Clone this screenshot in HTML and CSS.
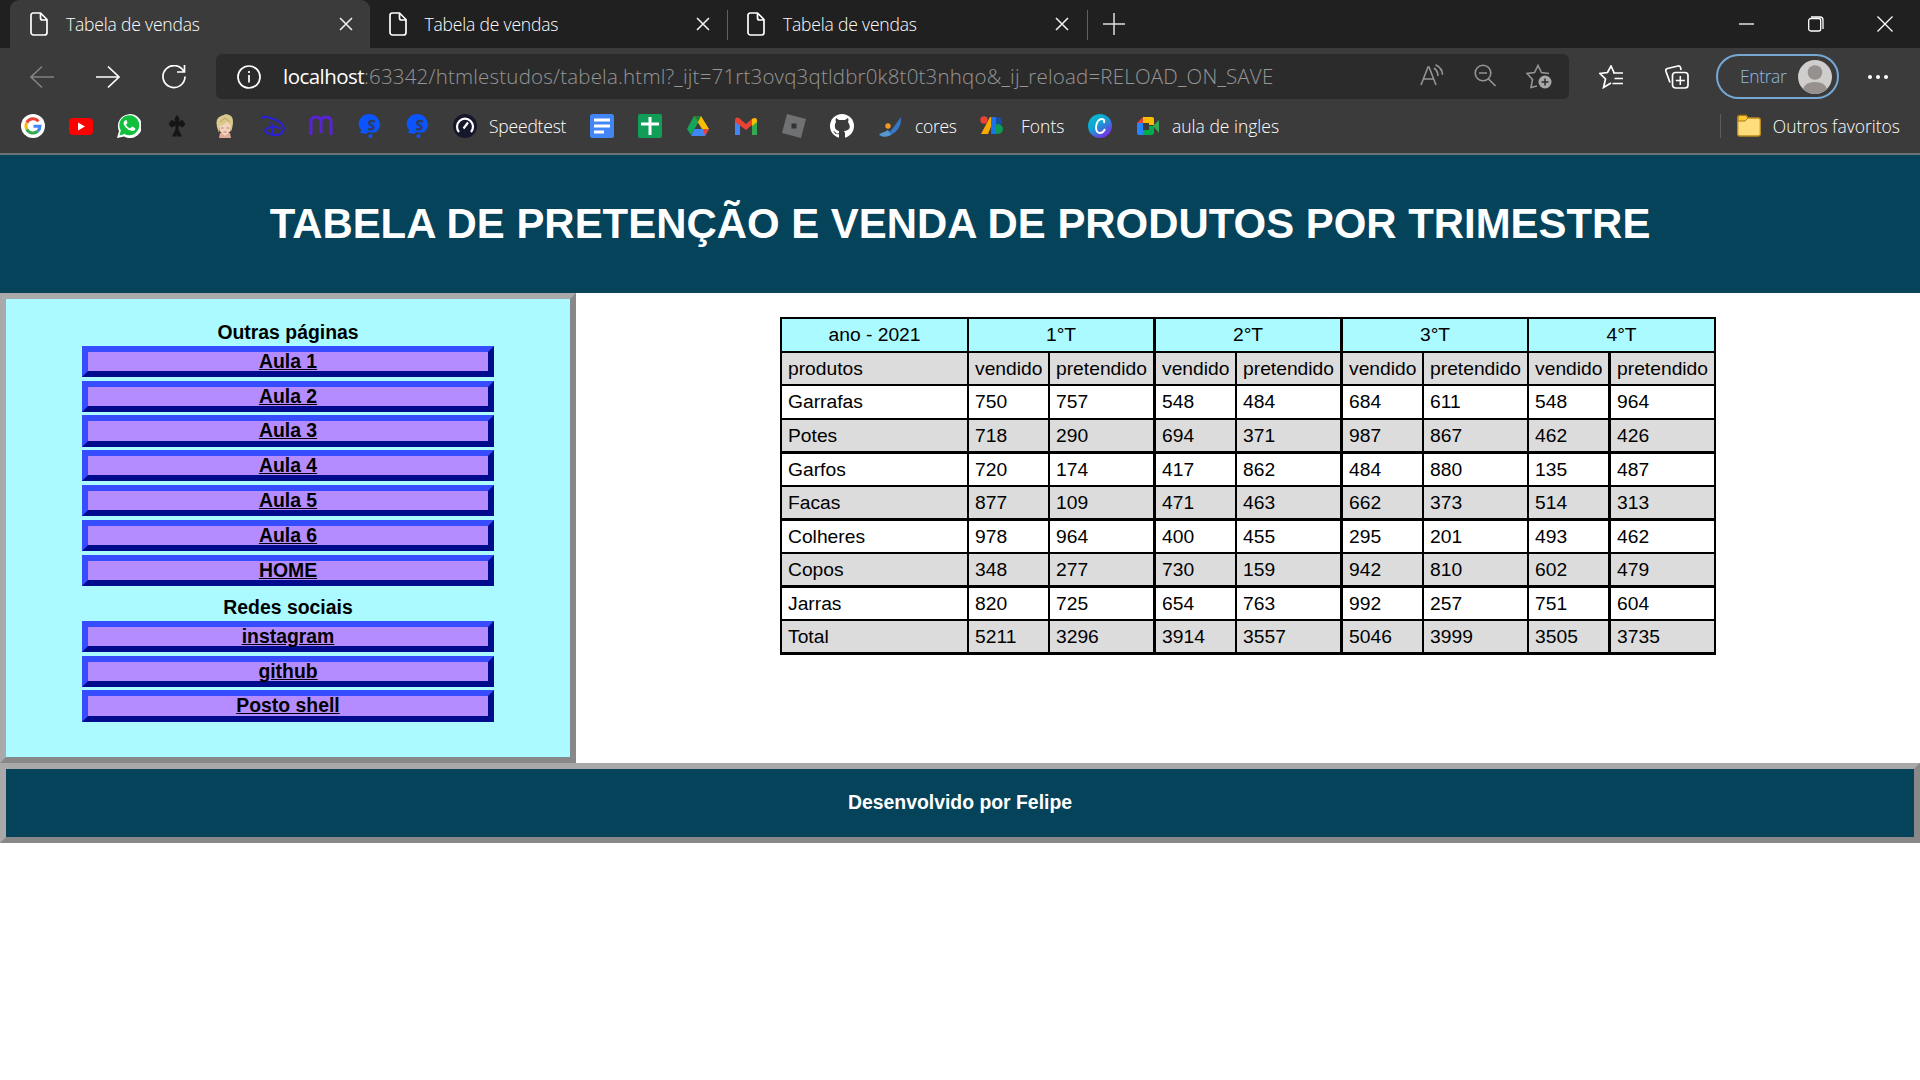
FILE: index.html
```html
<!DOCTYPE html>
<html lang="pt-BR">
<head>
<meta charset="utf-8">
<title>Tabela de vendas</title>
<link rel="stylesheet" href="styles.css">
</head>
<body>
<svg class="defs" width="0" height="0" aria-hidden="true">
  <symbol id="doc" viewBox="0 0 18 24"><path d="M3 1h7.5L17 7.500V20.500a2.500 2.500 0 0 1-2.500 2.500h-11A2.500 2.500 0 0 1 1 20.500V3.500A2.500 2.500 0 0 1 3 1zM10.500 1v5a2 2 0 0 0 2 2H17" fill="none" stroke="#fff" stroke-width="1.700"/></symbol>
  <symbol id="close" viewBox="0 0 14 14"><path d="M1 1l12 12M13 1L1 13" fill="none" stroke="#eee" stroke-width="1.600"/></symbol>
  <symbol id="shazam" viewBox="0 0 24 24"><path d="M12.500 0a10.500 10.500 0 0 1 8 17q-3 2.500-6 1.500l-3-.5-3 2-6-1.500 2-2Q1.500 13 1.500 9.500A10.500 10.500 0 0 1 12.500 0z" fill="#0b55ff"/><path d="M18 7.500c-6-1.500-8 1.500-4 3.500s3.500 5-3 4" fill="none" stroke="#2c3b66" stroke-width="2.400"/><circle cx="13.500" cy="22" r="2" fill="#0b55ff"/></symbol>
</svg>
<div class="browser">
  <div class="tabs">
    <div class="tab active"><svg class="doc"><use href="#doc"/></svg><span>Tabela de vendas</span><svg class="x"><use href="#close"/></svg></div>
    <div class="tab"><svg class="doc"><use href="#doc"/></svg><span>Tabela de vendas</span><svg class="x"><use href="#close"/></svg></div>
    <div class="tab ruled"><svg class="doc"><use href="#doc"/></svg><span>Tabela de vendas</span><svg class="x"><use href="#close"/></svg></div>
    <div class="newtab"><svg width="22" height="22"><path d="M11 0v22M0 11h22" stroke="#ddd" stroke-width="1.500"/></svg></div>
    <div class="controls">
      <svg width="16" height="16"><path d="M0 8h15" stroke="#fff" stroke-width="1.300"/></svg>
      <svg width="16" height="16"><path d="M3 1h9q3 0 3 3v9" fill="none" stroke="#fff" stroke-width="1.300"/><rect x=".7" y="2.500" width="12" height="12.500" rx="2" fill="none" stroke="#fff" stroke-width="1.300"/></svg>
      <svg width="16" height="16"><path d="M.5.5l15 15M15.500.5l-15 15" stroke="#fff" stroke-width="1.300"/></svg>
    </div>
  </div>
  <div class="toolbar">
    <div class="nav">
      <svg class="i24" viewBox="0 0 24 24"><path d="M24 12H1M12 1.500L1 12l11 10.500" fill="none" stroke="#828282" stroke-width="1.600"/></svg>
      <svg class="i24" viewBox="0 0 24 24"><path d="M0 12h23M12 1.500L23 12 12 22.500" fill="none" stroke="#fff" stroke-width="1.700"/></svg>
      <svg class="i24" viewBox="0 0 24 24"><path d="M22 7A11 11 0 1 0 23 11.500M22.500 0v7h-7.500" fill="none" stroke="#fff" stroke-width="1.700"/></svg>
    </div>
    <div class="address">
      <svg class="i24" viewBox="0 0 24 24"><circle cx="12" cy="12" r="11" fill="none" stroke="#fff" stroke-width="1.700"/><path d="M12 10v7.500M12 6v2" stroke="#fff" stroke-width="1.700"/></svg>
      <span class="url"><b>localhost</b>:63342/htmlestudos/tabela.html?_ijt=71rt3ovq3qtldbr0k8t0t3nhqo&amp;_ij_reload=RELOAD_ON_SAVE</span>
      <div class="address-actions">
        <svg class="i24" viewBox="0 0 24 24"><path d="M1 21L8 3h1l7 18M3.500 15h10M14 4q4 3 4 8M15.500.7q7 3.500 7 10" fill="none" stroke="#959595" stroke-width="1.600"/></svg>
        <svg class="i24" viewBox="0 0 24 24"><circle cx="10" cy="9" r="7.800" fill="none" stroke="#959595" stroke-width="1.600"/><path d="M6 9h8M15.500 15l7 7" stroke="#959595" stroke-width="1.700"/></svg>
        <svg class="i26" viewBox="0 0 26 25"><path d="M11 22l-6 1.500 1.500-8L1 9.500l7.500-1L12 1.500l3.500 7 7.500 1" fill="none" stroke="#959595" stroke-width="1.600"/><circle cx="19" cy="18" r="6.500" fill="#a8a8a8"/><path d="M19 14.500v7M15.500 18h7" stroke="#2b2b2b" stroke-width="1.500"/></svg>
      </div>
    </div>
    <div class="tools">
      <svg class="i24" viewBox="0 0 24 24"><path d="M12 18l-7.500 4.500 2-8.500L1 8.500l7.500-1L12 1l3 6.500M14 8h10M15.500 13.500H24M13.500 18.500H24" fill="none" stroke="#fff" stroke-width="1.700"/></svg>
      <svg class="i24" viewBox="0 0 24 24"><path d="M5 17.500L1 6.500q-.7-2.500 1.500-3L13 1q2-.5 2.700 2L16 5" fill="none" stroke="#fff" stroke-width="1.700"/><rect x="7.500" y="7.500" width="15.500" height="15.500" rx="3" fill="none" stroke="#fff" stroke-width="1.700"/><path d="M15.300 11v9M10.800 15.500h9" stroke="#fff" stroke-width="1.500"/></svg>
    </div>
    <div class="signin"><span>Entrar</span><svg width="34" height="34" viewBox="0 0 34 34"><circle cx="17" cy="17" r="17" fill="#d0cecc"/><circle cx="17" cy="12.500" r="7.300" fill="#96918e"/><path d="M5 29Q7 22 17 22t12 7Q24 34 17 34T5 29z" fill="#96918e"/></svg></div>
    <svg class="more" width="20" height="6"><circle cx="2" cy="3" r="2" fill="#fff"/><circle cx="10" cy="3" r="2" fill="#fff"/><circle cx="18" cy="3" r="2" fill="#fff"/></svg>
  </div>
  <div class="bookmarks">
    <svg class="i24" viewBox="0 0 24 24"><circle cx="12" cy="12" r="12" fill="#fff"/><g fill="none" stroke-width="3"><path d="M17.500 7.300A7 7 0 0 0 5.800 8.700" stroke="#ea4335"/><path d="M5.800 8.700A7 7 0 0 0 5.800 15.300" stroke="#fbbc05"/><path d="M5.800 15.300A7 7 0 0 0 16.800 17.200" stroke="#34a853"/><path d="M16.800 17.200A7 7 0 0 0 19 12.200H12.500" stroke="#4285f4"/></g></svg>
    <svg class="i24" viewBox="0 0 24 24"><rect y="4" width="24" height="17" rx="4" fill="#f00"/><path d="M9 8.500l7 4-7 4z" fill="#fff"/></svg>
    <svg class="i24" viewBox="0 0 24 24"><path d="M0 24l2-7A12 12 0 1 1 7 22.500z" fill="#fff"/><path d="M2.500 21.500l1.300-5A10 10 0 1 1 7.500 20z" fill="#12bf3c"/><path d="M8 6.500q-3 2 0 6t8 4.500q3-1 2-3l-3-1.500-2 2q-3-1-4-4l1.500-1.500L9.500 6z" fill="#fff"/></svg>
    <svg class="i24" viewBox="0 0 24 24"><path d="M12 1l2.500 3.500-1 3L17.500 6l3 4-3 3.500-4-2v4l3.500 7h-4.500l-.5-3-.5 3H7l3.500-7v-4l-4 2-3-3.500 3-4 4 1.500-1-3z" fill="#151515"/></svg>
    <svg class="i24" viewBox="0 0 24 24"><path d="M6 24l1-5h10l1 5z" fill="#dfac98"/><path d="M5.500 8h13l-1 9-5.500 5-5.500-5z" fill="#f5d2bd"/><path d="M4 13Q2 4 8 2l5-2q8 1 7 9l-1 6-1.500 3V11l-3.500-3-4 3-4 1 0 7z" fill="#d9c98c"/><path d="M8 14h2.500M13.500 14H16" stroke="#a08878"/><path d="M10.500 18h3" stroke="#b97878"/><path d="M7 8l5-4 5 4" fill="none" stroke="#b8a365" stroke-width="1"/></svg>
    <svg class="i24" viewBox="0 0 24 24"><path d="M0 5Q2 1.500 8 3.500q14 4 15 11-1 7-10 6.500-7-1-9-4 1-4 9-4 5 0 6 2M10 8q2 5 1 12" fill="none" stroke="#291fdc" stroke-width="2"/></svg>
    <svg class="i24" viewBox="0 0 24 24"><path d="M2 21V8q0-5 5-5t5 5v11V8q0-5 5-5t5 5v13" fill="none" stroke="#5a22d6" stroke-width="3"/></svg>
    <svg class="i24"><use href="#shazam"/></svg>
    <svg class="i24"><use href="#shazam"/></svg>
    <div class="mark speed"><svg class="i24" viewBox="0 0 24 24"><circle cx="12" cy="12" r="12" fill="#17172b"/><path d="M6 18A8 8 0 1 1 18 18" fill="none" stroke="#fff" stroke-width="2.200"/><path d="M10.500 14.500L15 8.500" stroke="#fff" stroke-width="2.200"/></svg><span>Speedtest</span></div>
    <svg class="i24" viewBox="0 0 24 24"><rect width="24" height="24" rx="2.500" fill="#4285f4"/><path d="M4 6h16M4 12h16M4 18h10" stroke="#fff" stroke-width="3"/></svg>
    <svg class="i24" viewBox="0 0 24 24"><rect width="24" height="24" rx="2" fill="#0f9d58"/><path d="M12 3v18M3 10h18" stroke="#fff" stroke-width="3"/></svg>
    <svg class="i24" viewBox="0 0 24 24"><path d="M8 2l4 7-7 12-4-6z" fill="#13a65b"/><path d="M8 2h7l8 13h-7z" fill="#fbbc05"/><path d="M8 2h7l-3 6z" fill="#188038"/><path d="M8.500 15H23l-4 7H5z" fill="#4285f4"/><path d="M17 15h6l-4 7z" fill="#ea4335"/></svg>
    <svg class="i24" viewBox="0 0 24 24"><path d="M1 7l5 3v11H1z" fill="#4285f4"/><path d="M18 10l5-3v14h-5z" fill="#34a853"/><path d="M1 7q0-5 4-3l7 6 7-6v6l-7 6-11-8z" fill="#ea4335"/><path d="M18 5q5-3 5 2v1l-5 4z" fill="#fbbc04"/></svg>
    <svg class="i24" viewBox="0 0 24 24"><path d="M5 0l19 5-5 19L0 19z" fill="#707173"/><rect x="9.500" y="9.500" width="5" height="5" fill="#333"/></svg>
    <svg class="i24" viewBox="0 0 24 24"><circle cx="12" cy="12" r="12" fill="#fff"/><path d="M9 24v-4q-4 1-5-2l-1-1q2 0 3 2 1 1 3 0v-2q-5-1-4-7l1-2q-1-2 0-4l3 2h6l3-2q1 2 0 4 5 8-4 9l1 2v5z" fill="#3b3b3b"/></svg>
    <div class="mark cores"><svg class="i24" viewBox="0 0 24 24"><path d="M23 3q1 12-10 18-8 3-12 0 10-1 14-7z" fill="#3677c7"/><path d="M1 20q6-2 9-4l3 5q-8 4-12-1z" fill="#5798cf"/><circle cx="10" cy="12" r="2.700" fill="#f39a24"/></svg><span>cores</span></div>
    <div class="mark fonts"><svg class="i24" viewBox="0 0 24 24"><path d="M10 3h4v2L8 20H1z" fill="#f9ab00"/><rect x="11" y="3" width="5" height="17" fill="#1a73e8"/><circle cx="4" cy="6" r="3.700" fill="#ea4335"/><path d="M16 3q6 0 6 4.500T16 12z" fill="#174ea6"/><path d="M16 10q7 0 7 5t-7 5z" fill="#0d9b55"/></svg><span>Fonts</span></div>
    <svg class="i24" viewBox="0 0 24 24"><defs><linearGradient id="canva" x1="0" y1="0" x2=".7" y2="1"><stop stop-color="#00c4cc"/><stop offset=".5" stop-color="#12a0d4"/><stop offset="1" stop-color="#7d2ae8"/></linearGradient></defs><circle cx="12" cy="12" r="12" fill="url(#canva)"/><path d="M16 9q1-4-2-4-5 0-6 8 0 6 4 6 3 0 5-4" fill="none" stroke="#fff" stroke-width="1.900"/></svg>
    <div class="mark meet"><svg class="i24" viewBox="0 0 24 24"><path d="M1 9l6-6v6z" fill="#ea4335"/><path d="M7 3h9q2 0 2 2v6h-5V9H7z" fill="#fbbc04"/><path d="M1 9h6v12H3q-2 0-2-2z" fill="#2684fc"/><path d="M7 16h6v-4h5v7q0 2-2 2H7z" fill="#00ac47"/><path d="M17 12l6-6v13z" fill="#35a853"/></svg><span>aula de ingles</span></div>
    <div class="mark other"><svg class="i24" viewBox="0 0 24 24"><path d="M.7 3Q1 1.500 3 1.500h6L11 4h10q2.300 0 2.300 2v14q0 2-2.300 2H3q-2.300 0-2.300-2z" fill="#ffdc7c" stroke="#bd8d1e" stroke-width="1.300"/><path d="M1 7h7l3-3-2-2.500H3Q1 1.500 1 3z" fill="#f9c92d" stroke="#a77717"/></svg><span>Outros favoritos</span></div>
  </div>
</div>
<header class="title"><h1>TABELA DE PRETENÇÃO E VENDA DE PRODUTOS POR TRIMESTRE</h1></header>
<main class="content">
  <aside class="sidebar">
    <h2>Outras páginas</h2>
    <ul>
      <li><a>Aula 1</a></li><li><a>Aula 2</a></li><li><a>Aula 3</a></li><li><a>Aula 4</a></li><li><a>Aula 5</a></li><li><a>Aula 6</a></li><li><a>HOME</a></li>
    </ul>
    <h2>Redes sociais</h2>
    <ul>
      <li><a>instagram</a></li><li><a>github</a></li><li><a>Posto shell</a></li>
    </ul>
  </aside>
  <section class="sales">
    <table>
      <colgroup><col class="c187"><col class="c81"><col class="c106"><col class="c81"><col class="c106"><col class="c81"><col class="c105"><col class="c82"><col class="c105"></colgroup>
      <thead>
        <tr><th>ano - 2021</th><th colspan="2" class="thick">1°T</th><th colspan="2" class="thick">2°T</th><th colspan="2">3°T</th><th colspan="2">4°T</th></tr>
      </thead>
      <tbody>
        <tr class="short"><td>produtos</td><td>vendido</td><td>pretendido</td><td>vendido</td><td>pretendido</td><td>vendido</td><td>pretendido</td><td>vendido</td><td>pretendido</td></tr>
        <tr><td>Garrafas</td><td>750</td><td>757</td><td>548</td><td>484</td><td>684</td><td>611</td><td>548</td><td>964</td></tr>
        <tr class="heavy"><td>Potes</td><td>718</td><td>290</td><td>694</td><td>371</td><td>987</td><td>867</td><td>462</td><td>426</td></tr>
        <tr class="short"><td>Garfos</td><td>720</td><td>174</td><td>417</td><td>862</td><td>484</td><td>880</td><td>135</td><td>487</td></tr>
        <tr class="heavy"><td>Facas</td><td>877</td><td>109</td><td>471</td><td>463</td><td>662</td><td>373</td><td>514</td><td>313</td></tr>
        <tr class="short"><td>Colheres</td><td>978</td><td>964</td><td>400</td><td>455</td><td>295</td><td>201</td><td>493</td><td>462</td></tr>
        <tr class="heavy"><td>Copos</td><td>348</td><td>277</td><td>730</td><td>159</td><td>942</td><td>810</td><td>602</td><td>479</td></tr>
        <tr class="short"><td>Jarras</td><td>820</td><td>725</td><td>654</td><td>763</td><td>992</td><td>257</td><td>751</td><td>604</td></tr>
        <tr class="heavy"><td>Total</td><td>5211</td><td>3296</td><td>3914</td><td>3557</td><td>5046</td><td>3999</td><td>3505</td><td>3735</td></tr>
      </tbody>
    </table>
  </section>
</main>
<footer class="credit">Desenvolvido por Felipe</footer>
</body>
</html>
```
FILE: styles.css
```css
* { box-sizing: border-box; }
body { margin: 0; background: #fff; color: #000; font-family: "Liberation Sans", Arial, sans-serif; font-size: 19.4px; }
svg { display: block; flex: none; }
.defs { position: absolute; }
.i24 { width: 24px; height: 24px; }
.i26 { width: 26px; height: 25px; }

.browser { height: 155px; background: #3b3b3b; border-bottom: 2px solid #6c7174; color: #fff; font-family: "Open Sans", "Noto Sans", sans-serif; font-weight: 300; font-size: 17.5px; white-space: nowrap; }
.tabs { display: flex; height: 48px; padding-left: 10px; background: #202020; }
.tab { display: flex; align-items: center; width: 358.5px; height: 48px; padding: 0 17px 0 20px; }
.tab.active { width: 360px; margin-right: -1.5px; background: #3b3b3b; border-radius: 9px 9px 0 0; }
.tab span { flex: 1; margin-left: 18px; padding-bottom: 1px; letter-spacing: -.18px; }
.doc { width: 18px; height: 24px; }
.x { width: 14px; height: 14px; }
.ruled { background: linear-gradient(#606060, #606060) 0 10px / 1px 30px no-repeat; }
.newtab { display: flex; align-items: center; padding-left: 17px; height: 48px; background: linear-gradient(#606060, #606060) 1px 10px / 1px 30px no-repeat; }
.controls { display: flex; align-items: center; gap: 53px; margin-left: auto; padding-right: 27px; }

.toolbar { display: flex; align-items: center; height: 57px; padding: 0 32px 0 30px; }
.nav { display: flex; gap: 42px; }
.address { display: flex; align-items: center; width: 1353px; height: 45px; margin-left: 30px; padding: 0 17px 0 21px; border-radius: 6px; background: #2b2b2b; }
.url { margin-left: 22px; padding-bottom: 2px; color: #969696; font-size: 20.5px; letter-spacing: .19px; }
.url b { color: #fff; font-weight: 400; letter-spacing: -.55px; }
.address-actions { display: flex; gap: 29px; margin-left: auto; }
.tools { display: flex; gap: 42px; margin-left: 30px; }
.signin { display: flex; align-items: center; justify-content: space-between; width: 123px; height: 45px; margin-left: 27px; padding: 0 5px 0 22px; border: 2px solid #76a8d5; border-radius: 23px; color: #8fbbe2; }
.signin span { padding-bottom: 1px; letter-spacing: -.4px; }
.more { margin-left: auto; }

.bookmarks { display: flex; align-items: center; gap: 24px; height: 42px; padding: 0 20px 0 21px; }
.mark { display: flex; align-items: center; gap: 12px; }
.mark span { padding-bottom: 1px; }
.speed { width: 113px; }
.speed span { letter-spacing: -.2px; }
.cores { width: 78px; gap: 13px; }
.cores span { letter-spacing: -.3px; }
.fonts { width: 84px; gap: 17px; }
.other { margin-left: auto; height: 24px; padding-left: 16px; border-left: 1px solid #5c5c5c; }

.title { display: flex; align-items: center; justify-content: center; height: 138px; background: #05435a; color: #fff; }
.title h1 { margin: 0; font-size: 41.92px; line-height: 48px; white-space: nowrap; }
.content { display: flex; height: 470px; }
.sidebar { width: 576px; padding: 22px 76px; border: 6px solid; border-color: #a9a9a9 #888 #888 #a9a9a9; background: #aafaff; font-weight: bold; text-align: center; }
.sidebar h2 { margin: 0; height: 24.75px; font-size: 19.4px; line-height: 23px; }
.sidebar ul { margin: 0; padding: 0; list-style: none; }
.sidebar li { height: 31.2px; margin-bottom: 3.63px; border: 6px solid; border-color: #384cff #000c8c #000c8c #384cff; background: #b48cff; line-height: 19px; }
.sidebar li a { display: block; text-decoration: underline; }
.sidebar ul + h2 { height: 31.25px; padding-top: 7px; }

.sales { flex: 1; padding: 24px 0 0 204px; }
table { width: 936px; table-layout: fixed; border-collapse: separate; border-spacing: 0; border-top: 2px solid #000; border-left: 2px solid #000; }
.c187 { width: 187px; }
.c81 { width: 81px; }
.c82 { width: 82px; }
.c105 { width: 105px; }
.c106 { width: 106px; }
th, td { height: 34px; padding: 0 0 0 6px; border-right: 2px solid #000; border-bottom: 2px solid #000; font-size: 19.25px; line-height: 22px; text-align: left; white-space: nowrap; }
th { padding: 0; background: #aafaff; font-weight: normal; text-align: center; }
.short td { height: 33px; }
.heavy td { border-bottom-width: 3px; }
.thick, td:nth-child(3), td:nth-child(5), td:nth-child(8) { border-right-width: 3px; }
tbody tr:nth-child(odd) { background: #dcdcdc; }
.credit { display: flex; align-items: center; justify-content: center; height: 80px; padding-bottom: 2px; border: 6px solid; border-color: #a9a9a9 #888 #888 #a9a9a9; background: #05435a; color: #fff; font-weight: bold; }
```
